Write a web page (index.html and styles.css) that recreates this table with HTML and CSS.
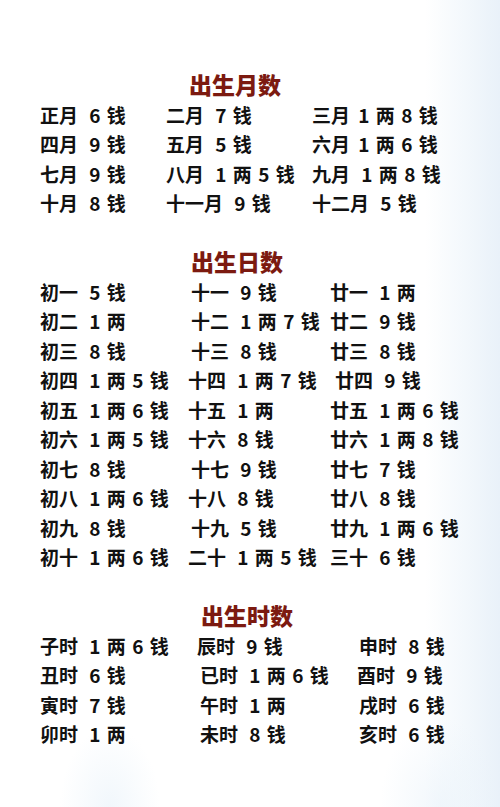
FILE: index.html
```html
<!DOCTYPE html>
<html lang="zh">
<head>
<meta charset="utf-8">
<link rel="stylesheet" href="styles.css">
</head>
<body>
<main class="page">
  <section class="block">
    <h2 class="title title-month">出生月数</h2>
    <div class="grid grid-month">
      <span><b class="k">正月</b> 6 钱</span><span><b class="k">二月</b> 7 钱</span><span><b class="k k-tight">三月</b> 1 两 8 钱</span>
      <span><b class="k">四月</b> 9 钱</span><span><b class="k">五月</b> 5 钱</span><span><b class="k k-tight">六月</b> 1 两 6 钱</span>
      <span><b class="k">七月</b> 9 钱</span><span><b class="k">八月</b> 1 两 5 钱</span><span><b class="k">九月</b> 1 两 8 钱</span>
      <span><b class="k">十月</b> 8 钱</span><span><b class="k">十一月</b> 9 钱</span><span><b class="k">十二月</b> 5 钱</span>
    </div>
  </section>
  <section class="block">
    <h2 class="title title-day">出生日数</h2>
    <div class="grid grid-day">
      <span><b class="k">初一</b> 5 钱</span><span class="n1"><b class="k">十一</b> 9 钱</span><span><b class="k">廿一</b> 1 两</span>
      <span><b class="k">初二</b> 1 两</span><span class="n1"><b class="k">十二</b> 1 两 7 钱</span><span><b class="k">廿二</b> 9 钱</span>
      <span><b class="k">初三</b> 8 钱</span><span class="n1"><b class="k">十三</b> 8 钱</span><span><b class="k">廿三</b> 8 钱</span>
      <span><b class="k">初四</b> 1 两 5 钱</span><span><b class="k">十四</b> 1 两 7 钱</span><span class="n2"><b class="k">廿四</b> 9 钱</span>
      <span><b class="k">初五</b> 1 两 6 钱</span><span><b class="k">十五</b> 1 两</span><span><b class="k">廿五</b> 1 两 6 钱</span>
      <span><b class="k">初六</b> 1 两 5 钱</span><span><b class="k">十六</b> 8 钱</span><span><b class="k">廿六</b> 1 两 8 钱</span>
      <span><b class="k">初七</b> 8 钱</span><span class="n1"><b class="k">十七</b> 9 钱</span><span><b class="k">廿七</b> 7 钱</span>
      <span><b class="k">初八</b> 1 两 6 钱</span><span><b class="k">十八</b> 8 钱</span><span><b class="k">廿八</b> 8 钱</span>
      <span><b class="k">初九</b> 8 钱</span><span class="n1"><b class="k">十九</b> 5 钱</span><span><b class="k">廿九</b> 1 两 6 钱</span>
      <span><b class="k">初十</b> 1 两 6 钱</span><span><b class="k">二十</b> 1 两 5 钱</span><span><b class="k">三十</b> 6 钱</span>
    </div>
  </section>
  <section class="block">
    <h2 class="title title-hour">出生时数</h2>
    <div class="grid grid-hour">
      <span><b class="k">子时</b> 1 两 6 钱</span><span><b class="k">辰时</b> 9 钱</span><span><b class="k">申时</b> 8 钱</span>
      <span><b class="k">丑时</b> 6 钱</span><span class="n1"><b class="k">已时</b> 1 两 6 钱</span><span class="m1"><b class="k">酉时</b> 9 钱</span>
      <span><b class="k">寅时</b> 7 钱</span><span class="n1"><b class="k">午时</b> 1 两</span><span><b class="k">戌时</b> 6 钱</span>
      <span><b class="k">卯时</b> 1 两</span><span class="n1"><b class="k">未时</b> 8 钱</span><span><b class="k">亥时</b> 6 钱</span>
    </div>
  </section>
</main>
</body>
</html>
```

FILE: styles.css
```css
html, body {
  margin: 0;
  padding: 0;
}

body {
  width: 500px;
  height: 807px;
  overflow: hidden;
  font-family: "Noto Sans CJK SC", "Noto Sans", sans-serif;
  color: #111111;
  background:
    radial-gradient(ellipse 50px 80px at 110px 807px, rgba(232, 242, 250, 0.6), rgba(255, 255, 255, 0)),
    radial-gradient(ellipse 60px 90px at 440px 807px, rgba(232, 242, 250, 0.6), rgba(255, 255, 255, 0)),
    linear-gradient(to right, #ffffff 0%, #ffffff 85%, #f3f8fc 93%, #e9f1f9 100%);
}

.page {
  padding-top: 70px;
  padding-left: 40px;
}

.block + .block {
  margin-top: 29.5px;
}

.title {
  margin: 0;
  font-size: 23px;
  font-weight: 900;
  line-height: 29.5px;
  color: #7c1a10;
}

.title-month { padding-left: 149px; }
.title-day { padding-left: 151px; }
.title-hour { padding-left: 161px; }

.grid {
  display: grid;
  font-size: 19px;
  font-weight: 700;
  line-height: 29.5px;
  white-space: nowrap;
  word-spacing: 2px;
}

.k {
  font-weight: inherit;
  margin-right: 5px;
}

.k-tight { margin-right: 2px; }

.grid-month { grid-template-columns: 126px 146px 1fr; }
.grid-day { grid-template-columns: 148px 142px 1fr; }
.grid-hour { grid-template-columns: 157px 162px 1fr; }

.n1 { padding-left: 3px; }
.n2 { padding-left: 5px; }
.m1 { margin-left: -2px; }
```
